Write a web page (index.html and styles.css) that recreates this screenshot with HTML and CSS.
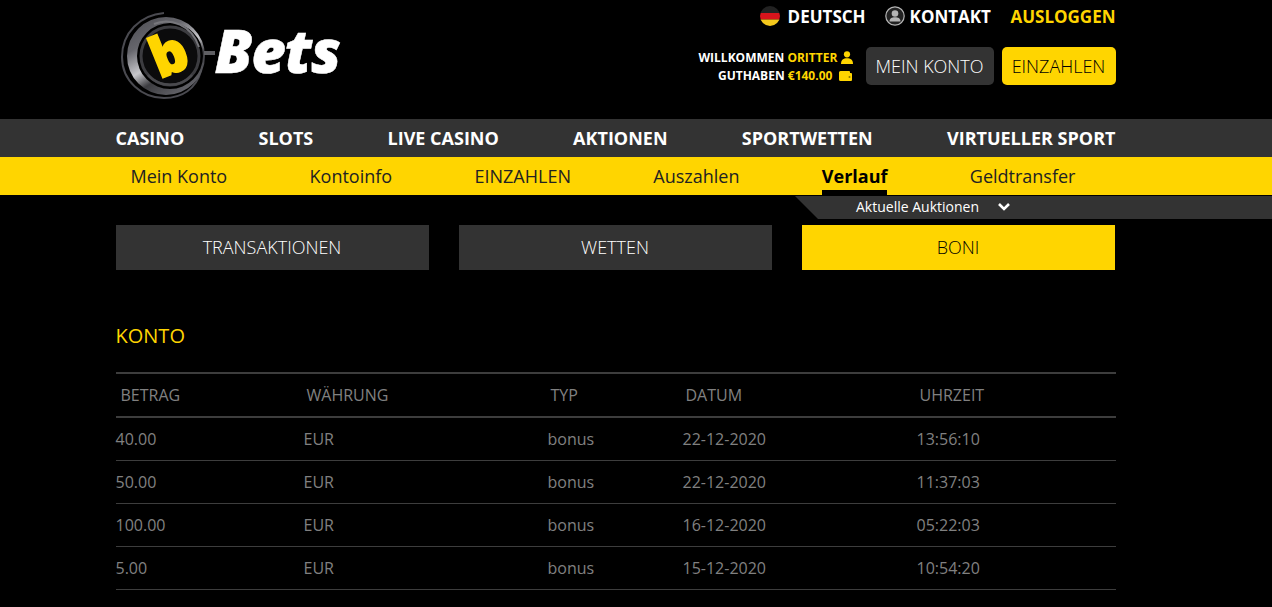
FILE: index.html
```html
<!DOCTYPE html>
<html lang="de">
<head>
    <meta charset="UTF-8">
    <meta name="viewport" content="width=device-width, initial-scale=1.0">
    <title>b-Bets | Verlauf</title>
    <link rel="stylesheet" href="styles.css">
</head>
<body>
    <header class="header">
        <div class="container header-inner">
            <a class="logo" href="#">
                <svg class="logo-mark" width="92" height="92" viewBox="0 0 92 92">
                    <defs>
                        <linearGradient id="ring" x1="0.1" y1="0" x2="0.7" y2="1">
                            <stop offset="0" stop-color="#4c4c52"/>
                            <stop offset="0.3" stop-color="#66666c"/>
                            <stop offset="0.55" stop-color="#c8c8cc"/>
                            <stop offset="0.72" stop-color="#3c3c40"/>
                            <stop offset="1" stop-color="#66666c"/>
                        </linearGradient>
                    </defs>
                    <path d="M44 4 C20 6 2 24 2 48 C2 72 22 89 44 89 C62 89 76 80 81 62" fill="none" stroke="#4a4a50" stroke-width="2"/>
                    <path fill-rule="evenodd" fill="url(#ring)" d="M46 8 A39 39 0 1 0 46 86 A39 39 0 1 0 46 8Z M50 14 A33 33 0 1 1 50 80 A33 33 0 1 1 50 14Z"/>
                    <circle cx="50" cy="47" r="29" fill="#0b0b0c" stroke="#3c3c40" stroke-width="3"/>
                    <path d="M34 15 C50 8 72 16 79 38" fill="none" stroke="#77777c" stroke-width="2"/>
                    <path d="M28 66 C38 78 60 80 72 66" fill="none" stroke="#4a4a4e" stroke-width="2.5"/>
                    <text class="logo-b" x="49" y="65" text-anchor="middle" transform="rotate(-22 49 46)">b</text>
                </svg>
                <span class="logo-dash"></span>
                <span class="logo-text">Bets</span>
            </a>
            <div class="header-right">
                <div class="top-links">
                    <a class="top-link lang" href="#">
                        <svg class="flag" width="20" height="20" viewBox="0 0 20 20">
                            <clipPath id="flag-clip"><circle cx="10" cy="10" r="10"/></clipPath>
                            <g clip-path="url(#flag-clip)">
                                <rect width="20" height="7" fill="#222"/>
                                <rect y="7" width="20" height="6.5" fill="#d8141c"/>
                                <rect y="13.5" width="20" height="6.5" fill="#f4c81c"/>
                            </g>
                        </svg>
                        DEUTSCH
                    </a>
                    <a class="top-link contact" href="#">
                        <svg width="20" height="20" viewBox="0 0 20 20">
                            <circle cx="10" cy="10" r="9.2" fill="#222" stroke="#b5b5b5" stroke-width="1.2"/>
                            <circle cx="10" cy="7.5" r="3.3" fill="#b5b5b5"/>
                            <path d="M4.5 15.5 C4.5 12 7 11.2 10 11.2 C13 11.2 15.5 12 15.5 15.5Z" fill="#b5b5b5"/>
                        </svg>
                        KONTAKT
                    </a>
                    <a class="top-link logout" href="#">AUSLOGGEN</a>
                </div>
                <div class="account">
                    <div class="account-info">
                        <div class="info-line">WILLKOMMEN <span class="yellow">ORITTER</span>
                            <svg width="12" height="13" viewBox="0 0 12 13">
                                <circle cx="6" cy="3.3" r="3.1" fill="#ffd500"/>
                                <path d="M0 13 C0 8.5 2.5 7.2 6 7.2 C9.5 7.2 12 8.5 12 13Z" fill="#ffd500"/>
                            </svg>
                        </div>
                        <div class="info-line">GUTHABEN <span class="yellow">€140.00</span>
                            <svg class="wallet" width="13" height="10" viewBox="0 0 13 10">
                                <path d="M1.5 0 H10 A1 1 0 0 1 11 1 V2 H12 A1 1 0 0 1 13 3 V9 A1 1 0 0 1 12 10 H1.5 A1.5 1.5 0 0 1 0 8.5 V1.5 A1.5 1.5 0 0 1 1.5 0Z" fill="#ffd500"/>
                                <circle cx="10.5" cy="6" r="1" fill="#8a7300"/>
                            </svg>
                        </div>
                    </div>
                    <a class="account-btn dark" href="#">MEIN KONTO</a>
                    <a class="account-btn gold" href="#">EINZAHLEN</a>
                </div>
            </div>
        </div>
    </header>

    <nav class="main-nav">
        <div class="container main-nav-inner">
            <a href="#">CASINO</a>
            <a href="#">SLOTS</a>
            <a href="#">LIVE CASINO</a>
            <a href="#">AKTIONEN</a>
            <a href="#">SPORTWETTEN</a>
            <a href="#">VIRTUELLER SPORT</a>
        </div>
    </nav>

    <nav class="sub-nav">
        <div class="container sub-nav-inner">
            <a href="#">Mein Konto</a>
            <a href="#">Kontoinfo</a>
            <a href="#">EINZAHLEN</a>
            <a href="#">Auszahlen</a>
            <a class="active" href="#">Verlauf</a>
            <a href="#">Geldtransfer</a>
        </div>
    </nav>

    <div class="auctions">
        <span>Aktuelle Auktionen</span>
        <svg width="14" height="10" viewBox="0 0 14 10">
            <path d="M2 2 L7 7 L12 2" fill="none" stroke="#fff" stroke-width="2.6"/>
        </svg>
    </div>

    <main class="container content">
        <div class="tabs">
            <a class="tab" href="#">TRANSAKTIONEN</a>
            <a class="tab" href="#">WETTEN</a>
            <a class="tab active" href="#">BONI</a>
        </div>

        <h2 class="section-title">KONTO</h2>

        <table class="history">
            <thead>
                <tr>
                    <th class="col-amount">BETRAG</th>
                    <th class="col-currency">WÄHRUNG</th>
                    <th class="col-type">TYP</th>
                    <th class="col-date">DATUM</th>
                    <th>UHRZEIT</th>
                </tr>
            </thead>
            <tbody>
                <tr><td>40.00</td><td>EUR</td><td>bonus</td><td>22-12-2020</td><td>13:56:10</td></tr>
                <tr><td>50.00</td><td>EUR</td><td>bonus</td><td>22-12-2020</td><td>11:37:03</td></tr>
                <tr><td>100.00</td><td>EUR</td><td>bonus</td><td>16-12-2020</td><td>05:22:03</td></tr>
                <tr><td>5.00</td><td>EUR</td><td>bonus</td><td>15-12-2020</td><td>10:54:20</td></tr>
            </tbody>
        </table>
    </main>
</body>
</html>
```

FILE: styles.css
```css
:root {
    --yellow: #ffd500;
    --dark: #333333;
    --line: #3d3d3d;
    --grey: #808080;
}

* {
    margin: 0;
    padding: 0;
    box-sizing: border-box;
}

body {
    background: #000;
    color: #fff;
    font-family: 'Open Sans', sans-serif;
    position: relative;
    overflow: hidden;
    height: 607px;
}

a {
    color: inherit;
    text-decoration: none;
}

.container {
    width: 1000px;
    margin-left: 115.5px;
}

.yellow {
    color: var(--yellow);
}

/* Header */
.header {
    height: 119px;
}

.header-inner {
    display: flex;
    justify-content: space-between;
}

.logo {
    display: flex;
    align-items: center;
    height: 110px;
    margin-left: 4px;
}

.logo-b {
    font-family: 'Open Sans', sans-serif;
    font-weight: 800;
    font-size: 56px;
    fill: var(--yellow);
    stroke: var(--yellow);
    stroke-width: 1.5px;
}

.logo-dash {
    width: 11px;
    height: 4px;
    background: #5f5f63;
    margin-left: -8px;
    margin-top: -4px;
}

.logo-text {
    font-family: 'Open Sans', sans-serif;
    font-weight: 800;
    font-style: italic;
    font-size: 60px;
    letter-spacing: -1.2px;
    line-height: 1;
    margin-top: -10px;
    -webkit-text-stroke: 0.5px #fff;
}

.header-right {
    display: flex;
    flex-direction: column;
    align-items: flex-end;
}

.top-links {
    display: flex;
    align-items: center;
    height: 32px;
    gap: 19.5px;
}

.top-link {
    display: flex;
    align-items: center;
    gap: 8px;
    font-size: 17px;
    font-weight: 700;
}

.top-link.lang {
    margin-right: -0.5px;
}

.top-link.contact {
    gap: 5px;
}

.logout {
    color: var(--yellow);
}

.account {
    display: flex;
    align-items: center;
    margin-top: 15px;
}

.account-info {
    text-align: right;
    font-size: 12px;
    font-weight: 700;
    line-height: 18px;
    margin-right: 13px;
    padding-top: 1px;
}

.info-line svg {
    vertical-align: -2px;
}

.info-line .wallet {
    margin-left: 3px;
    margin-right: 1px;
    vertical-align: -1px;
}

.account-btn {
    height: 38px;
    line-height: 38px;
    border-radius: 5px;
    font-size: 18px;
    font-weight: 300;
    text-align: center;
}

.account-btn.dark {
    width: 128px;
    background: var(--dark);
}

.account-btn.gold {
    width: 114px;
    margin-left: 8px;
    background: var(--yellow);
    color: #000;
}

/* Navigation */
.main-nav {
    background: var(--dark);
    height: 38px;
}

.main-nav-inner {
    display: flex;
    justify-content: space-between;
    line-height: 38px;
    font-size: 18px;
    font-weight: 700;
}

.sub-nav {
    background: var(--yellow);
    height: 38px;
    color: #222;
}

.sub-nav-inner {
    display: flex;
    justify-content: space-between;
    padding: 0 40px 0 15px;
    font-size: 18px;
    line-height: 38px;
}

.sub-nav a {
    height: 38px;
}

.sub-nav .active {
    color: #000;
    font-weight: 700;
    border-bottom: 5px solid #000;
}

.auctions {
    position: absolute;
    top: 196px;
    left: 795px;
    right: 0;
    height: 23px;
    padding: 0 0 2px 61px;
    display: flex;
    align-items: center;
    gap: 18px;
    background: var(--dark);
    font-size: 14px;
    clip-path: polygon(0 0, 100% 0, 100% 100%, 23px 100%);
}

/* Content */
.content {
    padding-top: 30px;
}

.tabs {
    display: flex;
    gap: 30px;
    width: 999px;
}

.tab {
    flex: 1;
    height: 45px;
    line-height: 45px;
    background: var(--dark);
    text-align: center;
    font-size: 18px;
    font-weight: 300;
}

.tab.active {
    background: var(--yellow);
    color: #000;
}

.section-title {
    color: var(--yellow);
    font-size: 20px;
    font-weight: 400;
    line-height: 24px;
    margin-top: 54px;
    margin-bottom: 24px;
}

.history {
    width: 100%;
    border-collapse: collapse;
    table-layout: fixed;
    color: var(--grey);
    font-size: 16px;
    border-top: 2px solid var(--line);
}

.history th {
    height: 44px;
    padding-left: 5px;
    font-weight: 400;
    text-align: left;
    border-bottom: 2px solid var(--line);
}

.history td {
    height: 43px;
    padding-left: 2px;
    border-bottom: 1px solid var(--line);
}

.history td:first-child {
    padding-left: 0;
}

.col-amount {
    width: 186px;
}

.col-currency {
    width: 244px;
}

.col-type {
    width: 135px;
}

.col-date {
    width: 234px;
}
```
